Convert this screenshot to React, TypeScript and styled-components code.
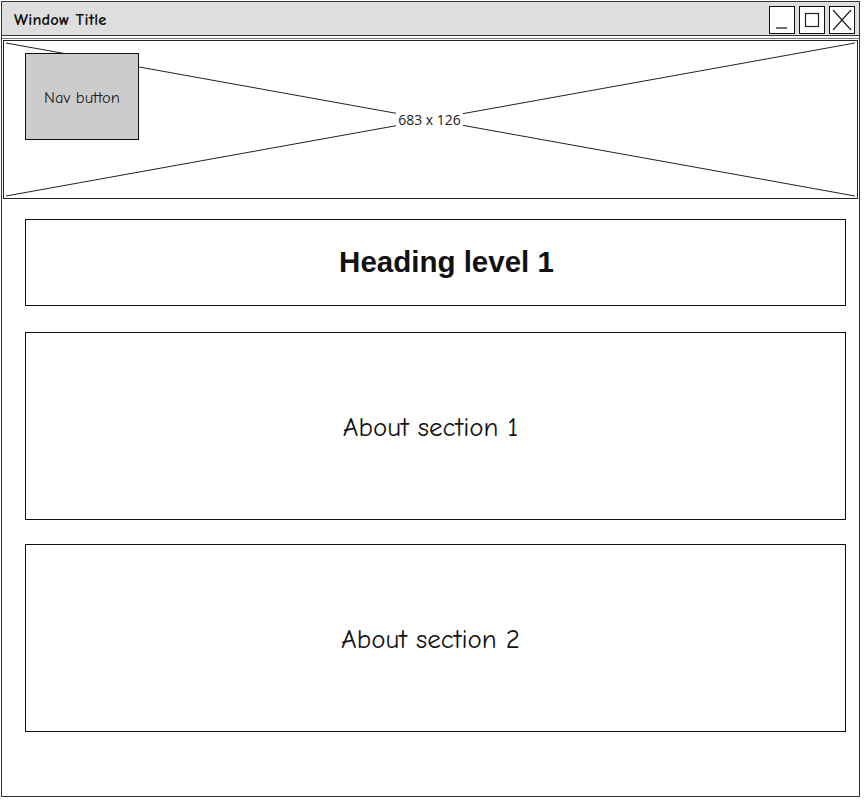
import React from "react";
import styled, { createGlobalStyle } from "styled-components";

const Global = createGlobalStyle`
  html, body { margin: 0; padding: 0; background: #ffffff; }
  body { font-family: "Comic Sans MS", "Comic Neue", "DejaVu Sans", sans-serif; }
`;

const sketch = `"Comic Sans MS", "Comic Neue", "Noto Sans", sans-serif`;

const Window = styled.div`
  box-sizing: border-box;
  margin: 1px 0 0 1px;
  width: 859px;
  height: 796px;
  border: 1px solid #333;
  display: flex;
  flex-direction: column;
  background: #fff;
`;

const TitleBar = styled.div`
  box-sizing: border-box;
  height: 34px;
  background: #dedede;
  border-bottom: 1px solid #333;
  display: flex;
  align-items: center;
  justify-content: space-between;
  padding: 0 4px 0 12px;
`;

const Title = styled.span`
  font-family: ${sketch};
  font-weight: 700;
  font-size: 16.5px;
  color: #111;
  letter-spacing: 0.2px;
  margin-top: 1px;
`;

const Controls = styled.div`
  display: flex;
  gap: 4px;
  margin-top: 3px;
`;

const CtrlButton = styled.div`
  box-sizing: border-box;
  width: 26px;
  height: 28px;
  background: #fff;
  border: 1px solid #111;
  display: flex;
  align-items: center;
  justify-content: center;
`;

const Content = styled.div`
  flex: 1;
  margin-top: 2px;
  border-top: 1px solid #777;
  padding: 1px 1px 0 1px;
  display: flex;
  flex-direction: column;
`;

const ImageBox = styled.div`
  position: relative;
  box-sizing: border-box;
  height: 159px;
  border: 1px solid #222;
  display: flex;
  align-items: center;
  justify-content: center;
`;

const Cross = styled.svg`
  position: absolute;
  inset: 0;
  width: 100%;
  height: 100%;
`;

const SizeLabel = styled.span`
  position: relative;
  font-family: "Open Sans", "Noto Sans", sans-serif;
  font-size: 14px;
  color: #222;
  background: #fff;
  padding: 0 2px;
  margin-left: -2px;
`;

const NavButton = styled.div`
  position: absolute;
  left: 21px;
  top: 12px;
  box-sizing: border-box;
  width: 114px;
  height: 87px;
  background: #cccccc;
  border: 1px solid #111;
  display: flex;
  align-items: center;
  justify-content: center;
  font-family: ${sketch};
  font-size: 16.5px;
  color: #222;
  padding-top: 2px;
`;

const Sections = styled.div`
  display: flex;
  flex-direction: column;
  padding: 20px 12px 0 22px;
`;

const Panel = styled.div<{ $h: number; $gap: number }>`
  box-sizing: border-box;
  height: ${(p) => p.$h}px;
  margin-top: ${(p) => p.$gap}px;
  border: 1px solid #111;
  display: flex;
  align-items: center;
  justify-content: center;
`;

const Heading = styled.h1`
  margin: 0;
  font-family: "Liberation Sans", Arial, sans-serif;
  font-weight: 700;
  font-size: 29.5px;
  color: #111;
  padding-left: 22px;
  padding-bottom: 2px;
`;

const AboutText = styled.span`
  font-family: ${sketch};
  font-size: 27px;
  color: #111;
  margin-left: -10px;
  margin-top: 2px;
`;

export default function App() {
  return (
    <>
      <Global />
      <Window>
        <TitleBar>
          <Title>Window Title</Title>
          <Controls>
            <CtrlButton>
              <svg width="24" height="26" viewBox="0 0 24 26">
                <line x1="6" y1="21" x2="17" y2="21" stroke="#222" strokeWidth="1.3" />
              </svg>
            </CtrlButton>
            <CtrlButton>
              <svg width="24" height="26" viewBox="0 0 24 26">
                <rect x="5.5" y="6.5" width="13" height="13" fill="none" stroke="#222" strokeWidth="1.2" />
              </svg>
            </CtrlButton>
            <CtrlButton>
              <svg width="24" height="26" viewBox="0 0 24 26">
                <line x1="3" y1="3" x2="21" y2="23" stroke="#222" strokeWidth="1.2" />
                <line x1="21" y1="3" x2="3" y2="23" stroke="#222" strokeWidth="1.2" />
              </svg>
            </CtrlButton>
          </Controls>
        </TitleBar>
        <Content>
          <ImageBox>
            <Cross viewBox="0 0 853 157" preserveAspectRatio="none">
              <line x1="2" y1="2" x2="851" y2="155" stroke="#222" strokeWidth="1" />
              <line x1="2" y1="155" x2="851" y2="2" stroke="#222" strokeWidth="1" />
            </Cross>
            <SizeLabel>683 x 126</SizeLabel>
            <NavButton>Nav button</NavButton>
          </ImageBox>
          <Sections>
            <Panel $h={87} $gap={0}>
              <Heading>Heading level 1</Heading>
            </Panel>
            <Panel $h={188} $gap={26}>
              <AboutText>About section 1</AboutText>
            </Panel>
            <Panel $h={188} $gap={24}>
              <AboutText>About section 2</AboutText>
            </Panel>
          </Sections>
        </Content>
      </Window>
    </>
  );
}
